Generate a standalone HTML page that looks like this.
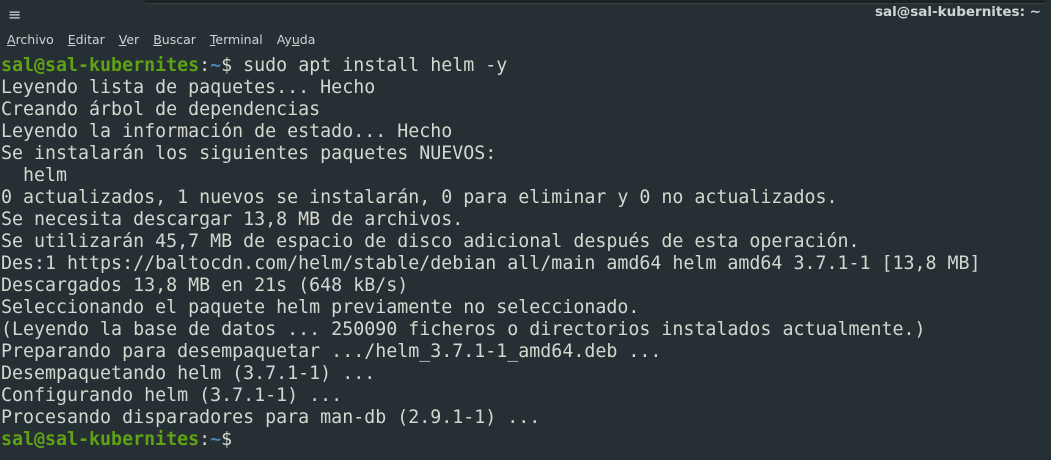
<!DOCTYPE html>
<html><head><meta charset="utf-8"><style>
html,body{margin:0;padding:0;width:1051px;height:460px;overflow:hidden;background:#263034;}
.top{position:absolute;left:145px;top:0;width:900px;height:3px;background:#1c2124;border-bottom:1px solid #3a3f42;}
.hb{position:absolute;left:8px;top:5px;color:#d8dcdc;font:16px "DejaVu Sans",sans-serif;}
.title{position:absolute;right:10px;top:4px;color:#d0d4d6;font:bold 13.5px "DejaVu Sans",sans-serif;}
.menu{position:absolute;left:7px;top:32px;color:#cfd3d3;font:12.5px "DejaVu Sans",sans-serif;}
.menu span{margin-right:14px;}
pre{position:absolute;left:1px;top:55px;margin:0;font:18.3px/22px "DejaVu Sans Mono",monospace;color:#d3d7cf;}
.g{color:#5fa215;font-weight:bold;}
.b{color:#4f80b8;font-weight:bold;}
</style></head><body>
<div class="top"></div>
<div class="hb">&#8801;</div>
<div class="title">sal@sal-kubernites: ~</div>
<div class="menu"><span><u>A</u>rchivo</span><span><u>E</u>ditar</span><span><u>V</u>er</span><span><u>B</u>uscar</span><span><u>T</u>erminal</span><span>Ay<u>u</u>da</span></div>
<pre><span class="g">sal@sal-kubernites</span>:<span class="b">~</span>$ sudo apt install helm -y
Leyendo lista de paquetes... Hecho
Creando árbol de dependencias
Leyendo la información de estado... Hecho
Se instalarán los siguientes paquetes NUEVOS:
  helm
0 actualizados, 1 nuevos se instalarán, 0 para eliminar y 0 no actualizados.
Se necesita descargar 13,8 MB de archivos.
Se utilizarán 45,7 MB de espacio de disco adicional después de esta operación.
Des:1 https://baltocdn.com/helm/stable/debian all/main amd64 helm amd64 3.7.1-1 [13,8 MB]
Descargados 13,8 MB en 21s (648 kB/s)
Seleccionando el paquete helm previamente no seleccionado.
(Leyendo la base de datos ... 250090 ficheros o directorios instalados actualmente.)
Preparando para desempaquetar .../helm_3.7.1-1_amd64.deb ...
Desempaquetando helm (3.7.1-1) ...
Configurando helm (3.7.1-1) ...
Procesando disparadores para man-db (2.9.1-1) ...
<span class="g">sal@sal-kubernites</span>:<span class="b">~</span>$</pre>
</body></html>
